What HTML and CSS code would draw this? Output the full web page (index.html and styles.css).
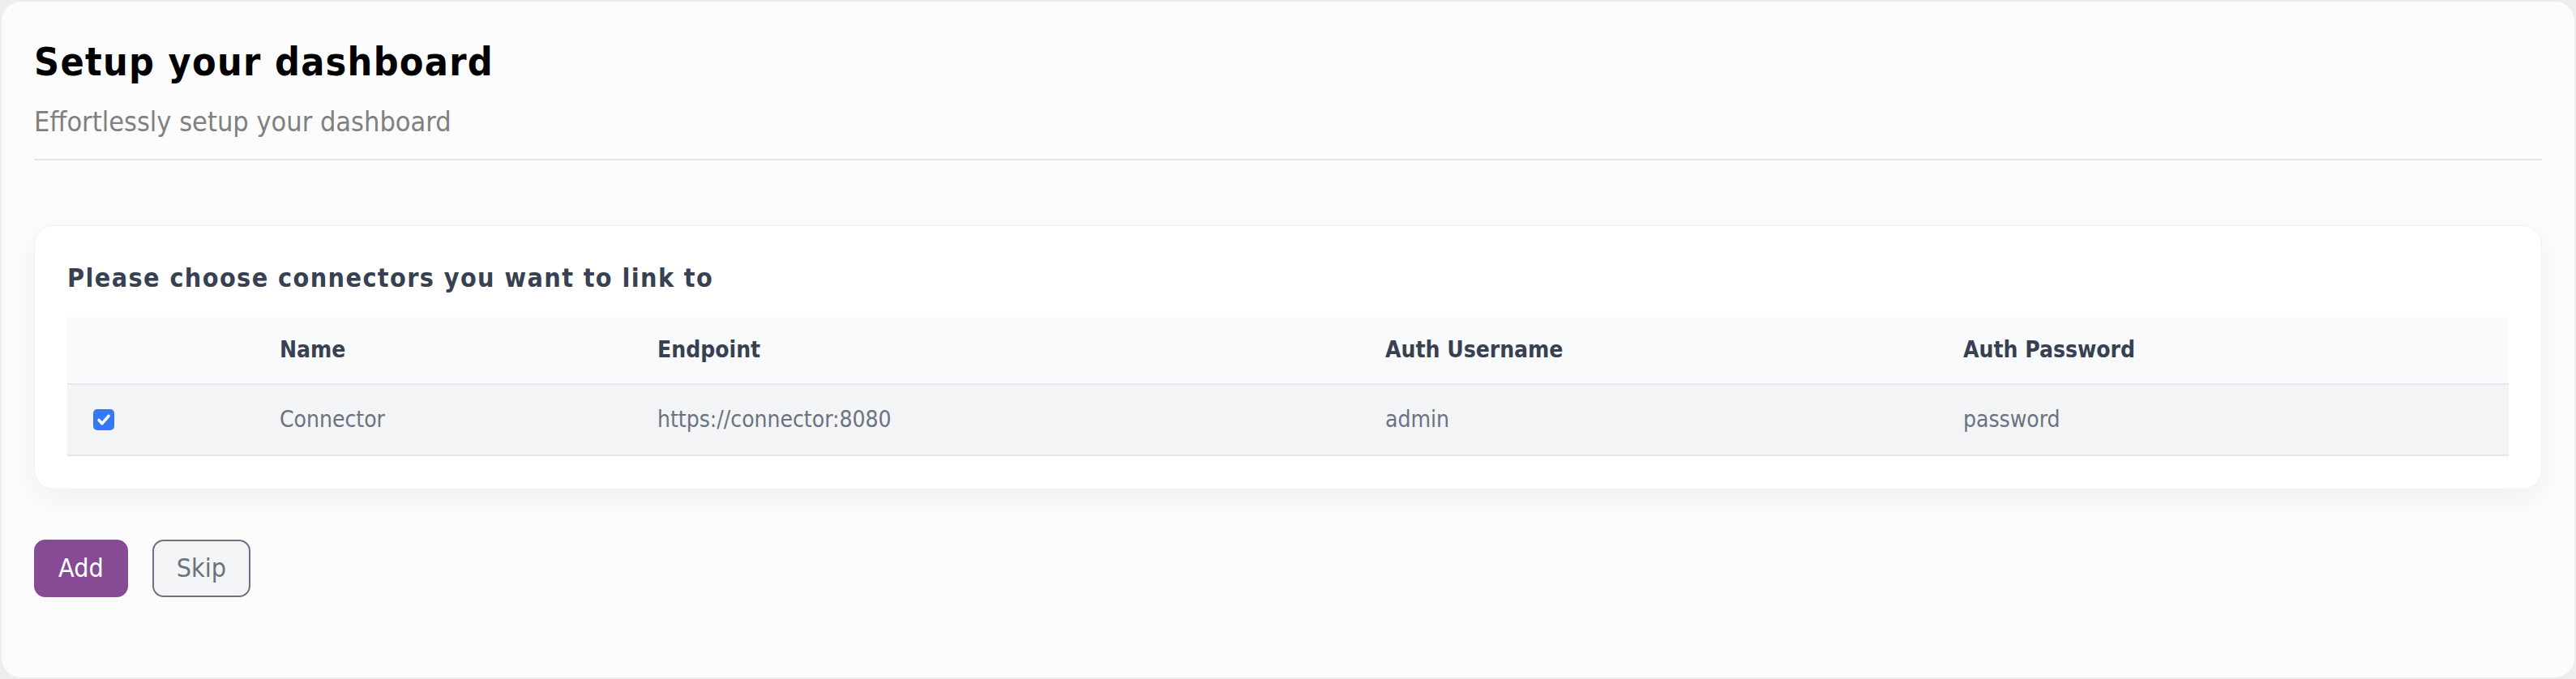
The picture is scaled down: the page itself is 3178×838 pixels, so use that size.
FILE: index.html
```html
<!DOCTYPE html>
<html lang="en">
<head>
  <meta charset="UTF-8" />
  <title>Setup your dashboard</title>
  <link rel="stylesheet" href="styles.css">
</head>
<body>
  <div class="page">
    <div class="header">
      <h1>Setup your dashboard</h1>
      <p class="subtitle">Effortlessly setup your dashboard</p>
    </div>

    <div class="card">
      <h3>Please choose connectors you want to link to</h3>
      <table class="connectors">
        <colgroup>
          <col style="width: 230px">
          <col style="width: 466px">
          <col style="width: 898px">
          <col style="width: 713px">
          <col style="width: 705px">
        </colgroup>
        <thead>
          <tr>
            <th></th>
            <th>Name</th>
            <th>Endpoint</th>
            <th>Auth Username</th>
            <th>Auth Password</th>
          </tr>
        </thead>
        <tbody>
          <tr>
            <td>
              <span class="check">
                <svg width="26" height="26" viewBox="0 0 26 26"><path d="M7 13.5l4 4.2 8-9.4" fill="none" stroke="#fff" stroke-width="3.6" stroke-linecap="round" stroke-linejoin="round"/></svg>
              </span>
            </td>
            <td>Connector</td>
            <td>https://connector:8080</td>
            <td>admin</td>
            <td>password</td>
          </tr>
        </tbody>
      </table>
    </div>

    <div class="actions">
      <button class="btn btn-add">Add</button>
      <button class="btn btn-skip">Skip</button>
    </div>
  </div>
</body>
</html>
```

FILE: styles.css
```css
body {
  margin: 0;
  padding: 2px;
  background: #ededed;
  font-family: "DejaVu Sans Condensed", "DejaVu Sans", sans-serif;
  font-stretch: condensed;
}
.page {
  box-sizing: border-box;
  height: 834px;
  padding: 44px 40px 40px;
  background: #fbfcfb;
  border-radius: 24px;
}
.header {
  padding-bottom: 22px;
  border-bottom: 2px solid #e5e7eb;
}
h1 {
  margin: 0;
  font-size: 48px;
  line-height: 60px;
  letter-spacing: 1.3px;
  color: #000;
}
.subtitle {
  margin: 20px 0 0;
  font-size: 34px;
  line-height: 48px;
  color: #808080;
}
.card {
  margin-top: 80px;
  padding: 40px;
  background: #fff;
  border: 1px solid #f1f2f2;
  border-radius: 24px;
  box-shadow: 0 12px 40px rgba(0, 0, 0, 0.05);
}
.card h3 {
  margin: 0 0 24px;
  font-size: 32px;
  line-height: 48px;
  letter-spacing: 1.4px;
  color: #374151;
}
.connectors {
  width: 100%;
  table-layout: fixed;
  border-collapse: collapse;
  font-size: 28px;
  line-height: 34px;
  text-align: left;
}
.connectors th {
  padding: 24px 32px;
  background: #f9fafb;
  color: #374151;
  border-bottom: 2px solid #e5e7eb;
}
.connectors td {
  padding: 26px 32px;
  background: #f3f4f6;
  color: #6b7280;
  border-bottom: 2px solid #e5e7eb;
}
.check {
  display: block;
  width: 26px;
  height: 26px;
  border-radius: 5px;
  background: #3478f6;
}
.check svg {
  display: block;
}
.actions {
  display: flex;
  gap: 30px;
  margin-top: 62px;
}
.btn {
  font-family: inherit;
  font-size: 32px;
  line-height: 39px;
  padding: 14px 28px;
  border-radius: 14px;
  border: 2px solid;
  cursor: pointer;
}
.btn-add {
  background: #874b96;
  border-color: #874b96;
  color: #fff;
}
.btn-skip {
  background: #f3f4f6;
  border-color: #6b7280;
  color: #6b7280;
}
```
